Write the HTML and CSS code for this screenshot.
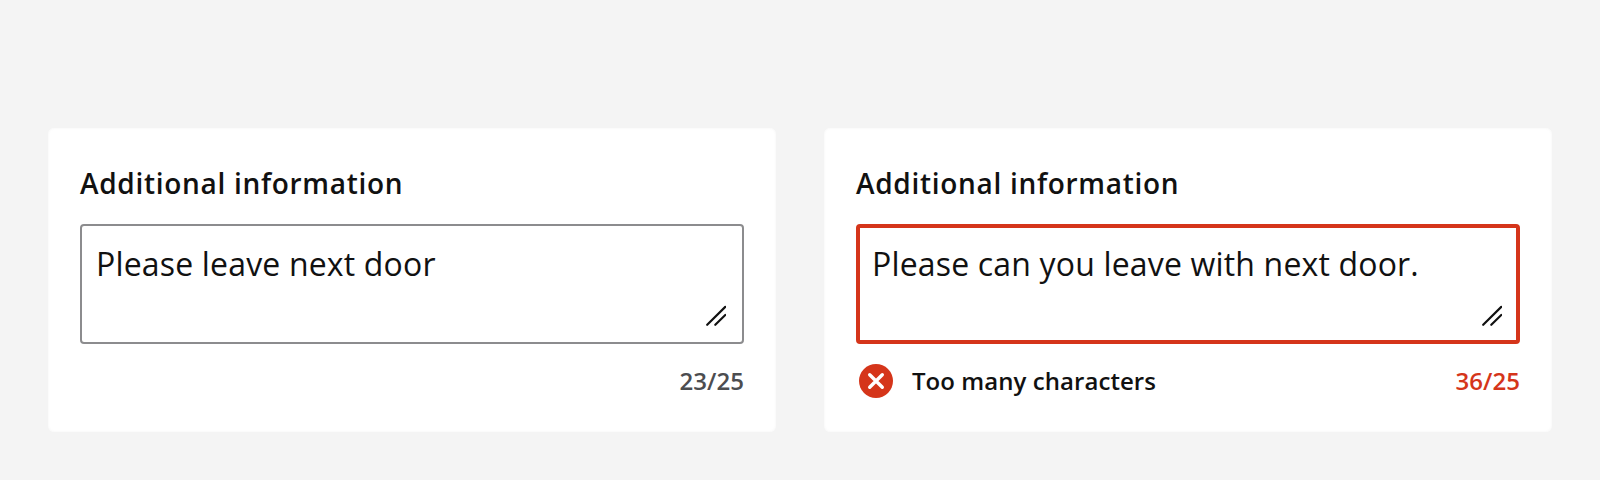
FILE: index.html
```html
<!DOCTYPE html>
<html lang="en">
<head>
<meta charset="utf-8">
<title>Additional information</title>
<link rel="stylesheet" href="styles.css">
</head>
<body>
<main class="board">
  <section class="card">
    <h2 class="label">Additional information</h2>
    <div class="field">
      <p class="value">Please leave next door</p>
      <svg class="grip" viewBox="0 0 22 22"><path d="M3.200 20.800 21.300 2.800M11.300 20.800 21.300 11"/></svg>
    </div>
    <div class="meta">
      <span class="count">23/25</span>
    </div>
  </section>
  <section class="card card-error">
    <h2 class="label">Additional information</h2>
    <div class="field">
      <p class="value">Please can you leave with next door.</p>
      <svg class="grip" viewBox="0 0 22 22"><path d="M3.200 20.800 21.300 2.800M11.300 20.800 21.300 11"/></svg>
    </div>
    <div class="meta">
      <svg class="error-icon" viewBox="0 0 34 34"><circle cx="17" cy="17" r="17"/><path d="M10.700 10.700 23.300 23.300M23.300 10.700 10.700 23.300"/></svg>
      <span class="message">Too many characters</span>
      <span class="count">36/25</span>
    </div>
  </section>
</main>
</body>
</html>
```
FILE: styles.css
```css
* { box-sizing: border-box; }
body { margin: 0; background: #f4f4f4; color: #111; font-family: "Open Sans", "Noto Sans", sans-serif; }
.board { display: flex; gap: 48px; height: 480px; padding: 128px 48px 48px; }
.card { flex: 1; height: 304px; padding: 32px; border-radius: 6px; background: #fff; box-shadow: inset 0 0 3px #f4f4f4; }
.label { margin: 0; height: 64px; padding-top: 3px; font-size: 28px; line-height: 40px; font-weight: 600; letter-spacing: 0.7px; white-space: nowrap; }
.field { display: flex; justify-content: space-between; height: 120px; padding: 14px 16px 16px 14px; border: 2px solid #8c8c8e; border-radius: 4px; }
.value { margin: 0; font-size: 32px; line-height: 48px; letter-spacing: 0.17px; white-space: nowrap; }
.grip { flex: none; align-self: flex-end; width: 22px; height: 22px; fill: none; stroke: #111; stroke-width: 2.2; stroke-linecap: round; }
.meta { display: flex; align-items: center; height: 48px; margin-top: 13px; font-size: 24px; line-height: 48px; font-weight: 600; letter-spacing: 0.06px; }
.count { margin-left: auto; color: #4c4d50; }
.error-icon { width: 34px; height: 34px; margin: 0 19px 0 3px; fill: #d5351a; }
.error-icon path { stroke: #fff; stroke-width: 3.4; stroke-linecap: round; }
.card-error .field { padding: 12px 14px 14px 12px; border: 4px solid #d5351a; }
.card-error .count { color: #d5351a; }
```
